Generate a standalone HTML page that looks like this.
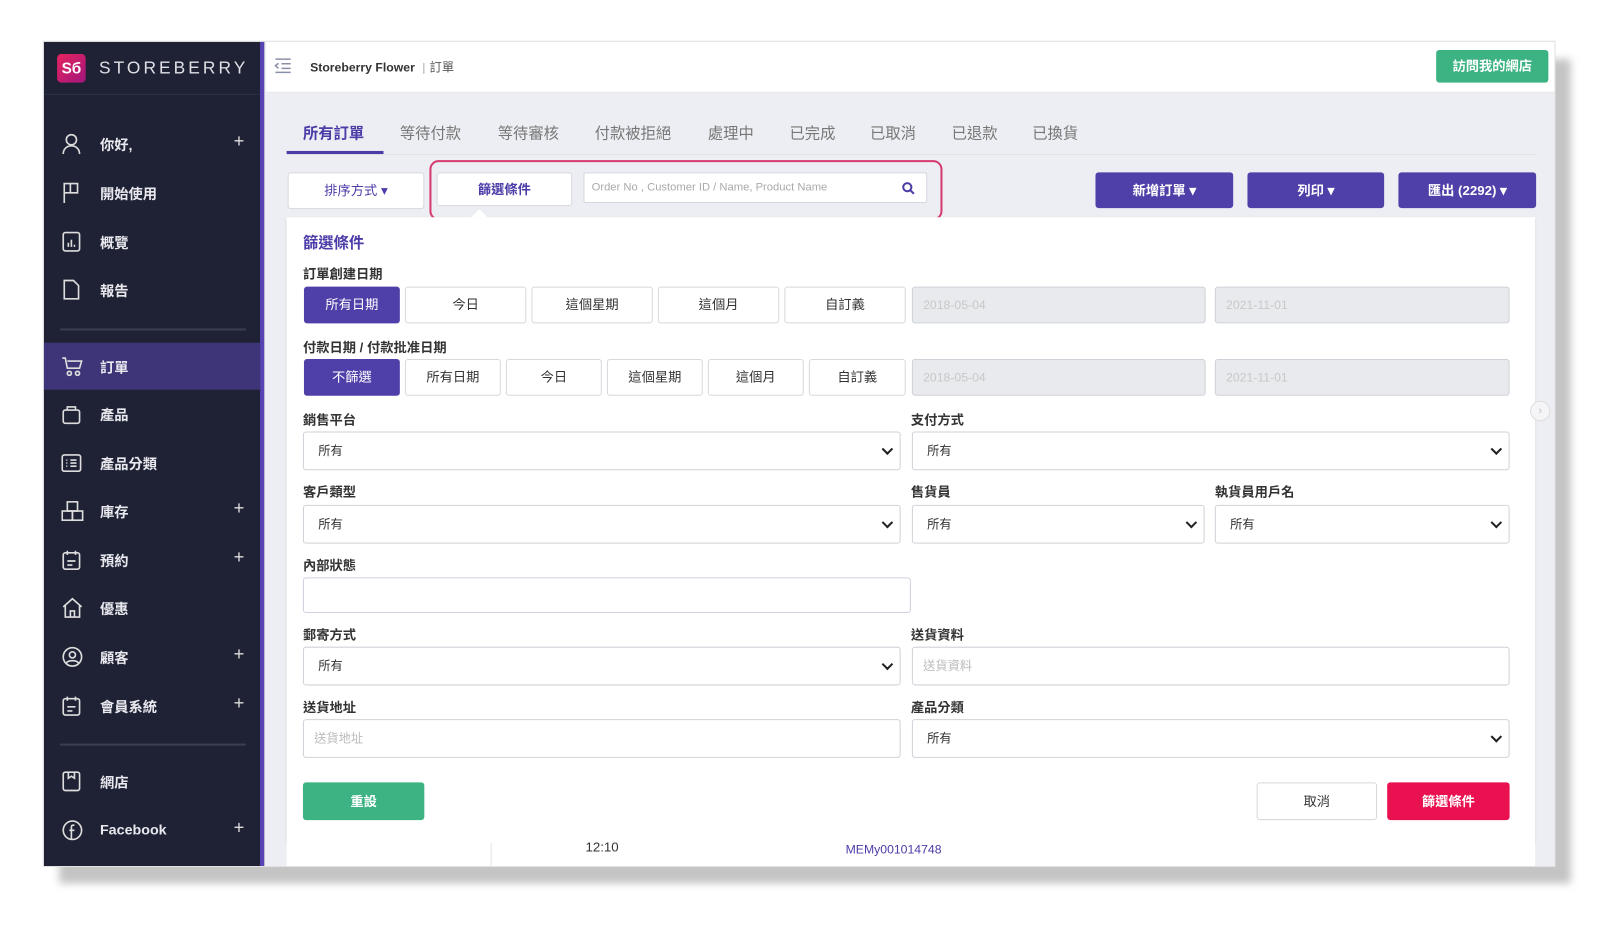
<!DOCTYPE html>
<html><head><meta charset="utf-8">
<style>
*{box-sizing:border-box;margin:0;padding:0}
body{width:1599px;height:928px;overflow:hidden;background:#fff;font-family:"Liberation Sans","Noto Sans CJK TC",sans-serif;}
#w{position:absolute;left:0;top:0;width:1560px;height:905px;transform:scale(1.02);transform-origin:0 0;}
.a{position:absolute}
.shadow{left:58px;top:58px;width:1482px;height:808px;background:#c4c4c4;filter:blur(4px)}
.card{left:42px;top:40px;width:1483px;height:810px;background:#eceef3;overflow:hidden;border:1px solid #e2e2e2}
.side{left:0;top:0;width:216px;height:810px;background:#1e2234;border-right:4px solid #5843b5}
.mi{position:absolute;left:0;width:212px;height:46px;color:#e8e8ee;font-size:14px;font-weight:bold}
.mi span{position:absolute;left:55px;top:14px}
.mi svg{position:absolute;left:17px;top:12px}
.mi i{position:absolute;left:186px;top:10px;font-style:normal;font-size:18px;font-weight:normal;color:#ddd}
.sep{position:absolute;left:16px;width:182px;height:2px;background:#3a3e52}
.tab{position:absolute;top:79px;font-size:15px;color:#777}
.btn{position:absolute;text-align:center;font-size:13px;border-radius:3px}
.ob{background:#fff;border:1px solid #d8d8de;color:#333}
.pb{background:#4f3fa8;color:#fff;font-weight:bold}
.lbl{position:absolute;font-size:13px;color:#333;font-weight:bold}
.sel{position:absolute;background:#fff;border:1px solid #cfd2d8;border-radius:3px;font-size:12px;color:#333;padding-left:14px}
.sel:after{content:"";position:absolute;right:8px;top:50%;width:6px;height:6px;border-right:2px solid #222;border-bottom:2px solid #222;transform:translateY(-70%) rotate(45deg)}
.dis{position:absolute;background:#e8eaed;border:1px solid #cfd2d8;border-radius:3px;font-size:12px;color:#c8c8c8;padding-left:10px}
</style></head><body><div id="w">
<div class="a shadow"></div>
<div class="a card">
 <div class="a side">
  <div class="a" style="left:13px;top:12px;width:28px;height:28px;border-radius:4px;background:linear-gradient(135deg,#e8245f,#a0157c);color:#fff;font-size:15px;font-weight:bold;text-align:center;line-height:30px">Sб</div>
  <div class="a" style="left:54px;top:16px;color:#e0e0e6;font-size:17px;letter-spacing:3px">STOREBERRY</div>
  <div class="a" style="left:0;top:51px;width:212px;height:1px;background:#2c3044"></div>
  <div class="mi" style="top:77px"><svg width="20" height="22" viewBox="0 0 20 22" fill="none" stroke="#ddd" stroke-width="1.6"><circle cx="10" cy="7" r="5"/><path d="M2 21c0-5 3.5-8 8-8s8 3 8 8"/></svg><span>你好,</span><i>+</i></div>
  <div class="mi" style="top:125px"><svg width="20" height="22" viewBox="0 0 20 22" fill="none" stroke="#ddd" stroke-width="1.6"><path d="M3 21V2h13v9H3M9 2v9"/></svg><span>開始使用</span></div>
  <div class="mi" style="top:173px"><svg width="20" height="22" viewBox="0 0 20 22" fill="none" stroke="#ddd" stroke-width="1.6"><rect x="2" y="2" width="16" height="18" rx="2"/><path d="M7 16v-4M10 16V9M13 16v-2"/></svg><span>概覽</span></div>
  <div class="mi" style="top:220px"><svg width="20" height="22" viewBox="0 0 20 22" fill="none" stroke="#ddd" stroke-width="1.6"><path d="M3 2h9l5 5v13H3z"/></svg><span>報告</span></div>
  <div class="sep" style="top:281px"></div>
  <div class="mi" style="top:295px;background:#3d3577"><svg width="22" height="22" viewBox="0 0 22 22" fill="none" stroke="#ddd" stroke-width="1.6"><path d="M1 3h3l2 10h12l2-7H6"/><circle cx="8" cy="18" r="2"/><circle cx="16" cy="18" r="2"/></svg><span>訂單</span></div>
  <div class="mi" style="top:342px"><svg width="20" height="22" viewBox="0 0 20 22" fill="none" stroke="#ddd" stroke-width="1.6"><rect x="2" y="7" width="16" height="13" rx="2"/><path d="M6 7V4h8v3"/></svg><span>產品</span></div>
  <div class="mi" style="top:390px"><svg width="20" height="22" viewBox="0 0 20 22" fill="none" stroke="#ddd" stroke-width="1.6"><rect x="1" y="3" width="18" height="16" rx="2"/><path d="M5 8h1M9 8h6M5 11h1M9 11h6M5 14h1M9 14h6"/></svg><span>產品分類</span></div>
  <div class="mi" style="top:437px"><svg width="22" height="22" viewBox="0 0 22 22" fill="none" stroke="#ddd" stroke-width="1.6"><rect x="6" y="2" width="10" height="9"/><rect x="1" y="11" width="10" height="9"/><rect x="11" y="11" width="10" height="9"/></svg><span>庫存</span><i>+</i></div>
  <div class="mi" style="top:485px"><svg width="20" height="22" viewBox="0 0 20 22" fill="none" stroke="#ddd" stroke-width="1.6"><rect x="2" y="4" width="16" height="16" rx="2"/><path d="M6 2v4M14 2v4M6 12h8M6 16h5"/></svg><span>預約</span><i>+</i></div>
  <div class="mi" style="top:532px"><svg width="22" height="22" viewBox="0 0 22 22" fill="none" stroke="#ddd" stroke-width="1.6"><path d="M2 10L11 2l9 8M4 8v12h14V8M9 20v-6h4v6"/></svg><span>優惠</span></div>
  <div class="mi" style="top:580px"><svg width="22" height="22" viewBox="0 0 22 22" fill="none" stroke="#ddd" stroke-width="1.6"><circle cx="11" cy="11" r="9"/><circle cx="11" cy="9" r="3"/><path d="M5 17c2-3 10-3 12 0"/></svg><span>顧客</span><i>+</i></div>
  <div class="mi" style="top:628px"><svg width="20" height="22" viewBox="0 0 20 22" fill="none" stroke="#ddd" stroke-width="1.6"><rect x="2" y="4" width="16" height="16" rx="2"/><path d="M6 2v4M14 2v4M6 12h8M6 16h5"/></svg><span>會員系統</span><i>+</i></div>
  <div class="sep" style="top:688px"></div>
  <div class="mi" style="top:702px"><svg width="20" height="22" viewBox="0 0 20 22" fill="none" stroke="#ddd" stroke-width="1.6"><rect x="2" y="2" width="16" height="18" rx="2"/><path d="M7 2v6l3-2 3 2V2"/></svg><span>網店</span></div>
  <div class="mi" style="top:750px"><svg width="22" height="22" viewBox="0 0 22 22" fill="none" stroke="#ddd" stroke-width="1.6"><circle cx="11" cy="11" r="9"/><path d="M13 6h-1.5c-1 0-1.5.8-1.5 2v12M8 11h5"/></svg><span>Facebook</span><i>+</i></div>
 </div>
 <div class="a" style="left:218px;top:0;width:1265px;height:50px;background:#fff;border-bottom:1px solid #e4e6ea"></div>
 <svg class="a" style="left:226px;top:16px" width="17" height="15" viewBox="0 0 17 15" fill="none" stroke="#8a8fa8" stroke-width="1.5"><path d="M1 1h15M7 5.5h9M7 10h9M1 14h15M4 5L1 7.5 4 10"/></svg>
 <div class="a" style="left:261px;top:16px;font-size:12px;font-weight:bold;color:#333">Storeberry Flower <span style="color:#aaa;font-weight:normal;margin:0 4px">|</span><span style="font-weight:normal;color:#555">訂單</span></div>
 <div class="btn" style="left:1365px;top:8px;width:110px;height:32px;line-height:32px;background:#3db383;color:#fff;font-weight:bold">訪問我的網店</div>
 <div class="a" style="left:238px;top:110px;width:1225px;height:1px;background:#dfe1e6"></div>
 <div class="tab" style="left:254px;color:#4b3ca8;font-weight:bold">所有訂單</div>
 <div class="a" style="left:238px;top:107px;width:95px;height:3px;background:#4b3ca8"></div>
 <div class="tab" style="left:349px">等待付款</div>
 <div class="tab" style="left:445px">等待審核</div>
 <div class="tab" style="left:540px">付款被拒絕</div>
 <div class="tab" style="left:651px">處理中</div>
 <div class="tab" style="left:731px">已完成</div>
 <div class="tab" style="left:810px">已取消</div>
 <div class="tab" style="left:890px">已退款</div>
 <div class="tab" style="left:969px">已換貨</div>
 <div class="btn ob" style="left:239px;top:128px;width:134px;height:36px;line-height:34px;color:#4b3ca8">排序方式 ▾</div>
 <div class="a" style="left:378px;top:116px;width:503px;height:59px;border:2.5px solid #d63a6e;border-radius:9px"></div>
 <div class="btn ob" style="left:385px;top:128px;width:133px;height:33px;line-height:31px;color:#4b3ca8;font-weight:bold">篩選條件</div>
 <div class="a" style="left:529px;top:128px;width:337px;height:30px;background:#fff;border:1px solid #d5d7e0;border-radius:2px;font-size:11px;color:#aaa;padding:8px 7px">Order No , Customer ID / Name, Product Name</div>
 <svg class="a" style="left:841px;top:137px" width="13" height="13" viewBox="0 0 13 13" fill="none" stroke="#4b3ca8" stroke-width="2"><circle cx="5.5" cy="5.5" r="4"/><path d="M8.5 8.5L12 12"/></svg>
 <div class="btn pb" style="left:1031px;top:128px;width:135px;height:35px;line-height:35px">新增訂單 ▾</div>
 <div class="btn pb" style="left:1180px;top:128px;width:134px;height:35px;line-height:35px">列印 ▾</div>
 <div class="btn pb" style="left:1328px;top:128px;width:135px;height:35px;line-height:35px">匯出 (2292) ▾</div>
 <div class="a" style="left:238px;top:172px;width:1224px;height:613px;background:#fff;box-shadow:0 1px 3px rgba(0,0,0,.12)"></div>
 <div class="a" style="left:419px;top:164px;width:0;height:0;border-left:8px solid transparent;border-right:8px solid transparent;border-bottom:8px solid #fff"></div>
 <div class="a" style="left:254px;top:186px;font-size:15px;font-weight:bold;color:#4b3ca8">篩選條件</div>
 <div class="lbl" style="left:254px;top:217px">訂單創建日期</div>
 <div class="btn pb" style="left:255px;top:240px;width:94px;height:36px;line-height:36px;font-weight:normal">所有日期</div>
 <div class="btn ob" style="left:354px;top:240px;width:119px;height:36px;line-height:34px">今日</div>
 <div class="btn ob" style="left:478px;top:240px;width:119px;height:36px;line-height:34px">這個星期</div>
 <div class="btn ob" style="left:602px;top:240px;width:119px;height:36px;line-height:34px">這個月</div>
 <div class="btn ob" style="left:726px;top:240px;width:119px;height:36px;line-height:34px">自訂義</div>
 <div class="dis" style="left:851px;top:240px;width:288px;height:36px;line-height:34px">2018-05-04</div>
 <div class="dis" style="left:1148px;top:240px;width:289px;height:36px;line-height:34px">2021-11-01</div>
 <div class="lbl" style="left:254px;top:289px">付款日期 / 付款批准日期</div>
 <div class="btn pb" style="left:255px;top:311px;width:94px;height:36px;line-height:36px;font-weight:normal">不篩選</div>
 <div class="btn ob" style="left:354px;top:311px;width:94px;height:36px;line-height:34px">所有日期</div>
 <div class="btn ob" style="left:453px;top:311px;width:94px;height:36px;line-height:34px">今日</div>
 <div class="btn ob" style="left:552px;top:311px;width:94px;height:36px;line-height:34px">這個星期</div>
 <div class="btn ob" style="left:651px;top:311px;width:94px;height:36px;line-height:34px">這個月</div>
 <div class="btn ob" style="left:750px;top:311px;width:95px;height:36px;line-height:34px">自訂義</div>
 <div class="dis" style="left:851px;top:311px;width:288px;height:36px;line-height:34px">2018-05-04</div>
 <div class="dis" style="left:1148px;top:311px;width:289px;height:36px;line-height:34px">2021-11-01</div>
 <div class="lbl" style="left:254px;top:360px">銷售平台</div>
 <div class="lbl" style="left:850px;top:360px">支付方式</div>
 <div class="sel" style="left:254px;top:382px;width:586px;height:38px;line-height:36px">所有</div>
 <div class="sel" style="left:851px;top:382px;width:586px;height:38px;line-height:36px">所有</div>
 <div class="lbl" style="left:254px;top:431px">客戶類型</div>
 <div class="lbl" style="left:850px;top:431px">售貨員</div>
 <div class="lbl" style="left:1148px;top:431px">執貨員用戶名</div>
 <div class="sel" style="left:254px;top:454px;width:586px;height:38px;line-height:36px">所有</div>
 <div class="sel" style="left:851px;top:454px;width:287px;height:38px;line-height:36px">所有</div>
 <div class="sel" style="left:1148px;top:454px;width:289px;height:38px;line-height:36px">所有</div>
 <div class="lbl" style="left:254px;top:503px">內部狀態</div>
 <div class="a" style="left:254px;top:525px;width:596px;height:35px;border:1px solid #cfd2e0;border-radius:3px;background:#fff"></div>
 <div class="lbl" style="left:254px;top:571px">郵寄方式</div>
 <div class="lbl" style="left:850px;top:571px">送貨資料</div>
 <div class="sel" style="left:254px;top:593px;width:586px;height:38px;line-height:36px">所有</div>
 <div class="dis" style="left:851px;top:593px;width:586px;height:38px;line-height:36px;background:#fff;color:#bbb">送貨資料</div>
 <div class="lbl" style="left:254px;top:642px">送貨地址</div>
 <div class="lbl" style="left:850px;top:642px">產品分類</div>
 <div class="dis" style="left:254px;top:664px;width:586px;height:38px;line-height:36px;background:#fff;color:#bbb">送貨地址</div>
 <div class="sel" style="left:851px;top:664px;width:586px;height:38px;line-height:36px">所有</div>
 <div class="btn" style="left:254px;top:726px;width:119px;height:37px;line-height:37px;background:#3db383;color:#fff;font-weight:bold">重設</div>
 <div class="btn ob" style="left:1189px;top:726px;width:118px;height:37px;line-height:35px">取消</div>
 <div class="btn" style="left:1317px;top:726px;width:120px;height:37px;line-height:37px;background:#ea1150;color:#fff;font-weight:bold">篩選條件</div>
 <div class="a" style="left:238px;top:785px;width:1224px;height:30px;background:#fff"></div>
 <div class="a" style="left:438px;top:785px;width:1px;height:30px;background:#e4e4e4"></div>
 <div class="a" style="left:531px;top:782px;font-size:13px;color:#333">12:10</div>
 <div class="a" style="left:786px;top:785px;font-size:12px;color:#4b3ca8">MEMy001014748</div>
 <div class="a" style="left:1457px;top:352px;width:20px;height:20px;border-radius:50%;border:1px solid #ddd;background:#f5f5f7;color:#bbb;font-size:11px;text-align:center;line-height:18px">›</div>
</div>
</div></body></html>
